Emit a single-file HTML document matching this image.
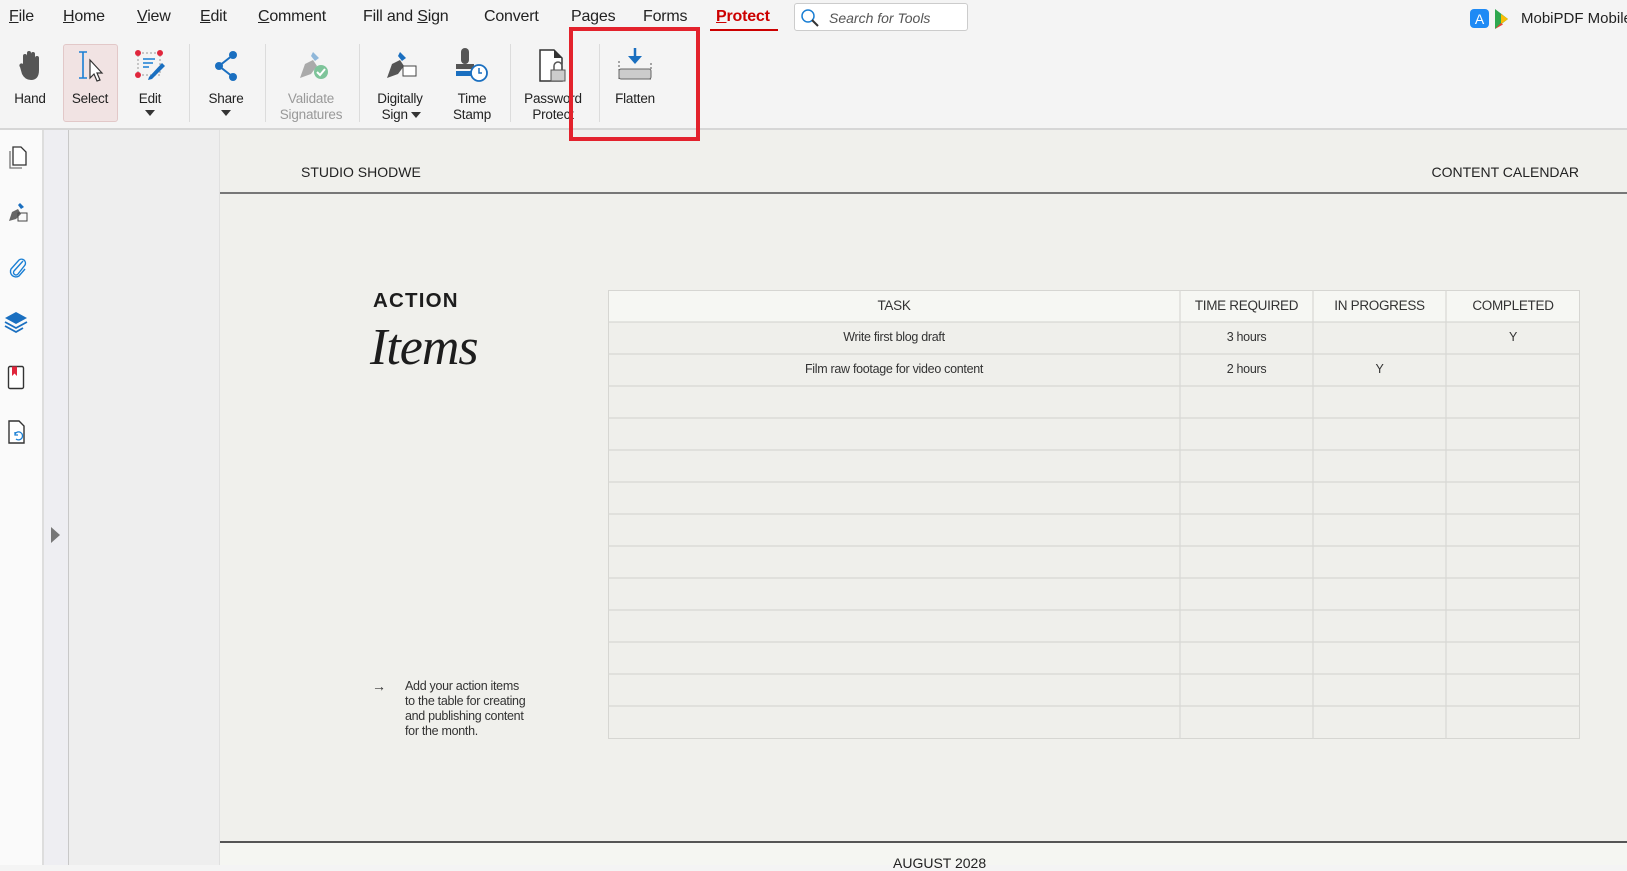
<!DOCTYPE html>
<html><head><meta charset="utf-8"><style>
*{margin:0;padding:0;box-sizing:border-box}
body{width:1627px;height:865px;overflow:hidden;background:#f4f4f4;font-family:"Liberation Sans",sans-serif;position:relative;color:#222}
.a{position:absolute}
.m{position:absolute;top:8px;font-size:16px;color:#222;letter-spacing:-0.2px}
.m u{text-decoration:underline}
.tb{position:absolute;top:91px;font-size:13.5px;color:#222;text-align:center;line-height:16px;transform:translateX(-50%);white-space:nowrap;letter-spacing:-0.2px}
.sep{position:absolute;top:44px;width:1px;height:78px;background:#dcdcdc}
.ic{position:absolute}
.cell{position:absolute;font-size:12.5px;color:#333;text-align:center;letter-spacing:-0.3px}
</style></head><body>
<!-- menu -->
<div class="m" style="left:9px"><u>F</u>ile</div>
<div class="m" style="left:63px"><u>H</u>ome</div>
<div class="m" style="left:137px"><u>V</u>iew</div>
<div class="m" style="left:200px"><u>E</u>dit</div>
<div class="m" style="left:258px"><u>C</u>omment</div>
<div class="m" style="left:363px">Fill and <u>S</u>ign</div>
<div class="m" style="left:484px">Convert</div>
<div class="m" style="left:571px">Pages</div>
<div class="m" style="left:643px">Forms</div>
<div class="m" style="left:716px;color:#c00;font-weight:bold"><u>P</u>rotect</div>
<div class="a" style="left:710px;top:29px;width:68px;height:2px;background:#c00"></div>
<div class="a" style="left:794px;top:3px;width:174px;height:28px;background:#fff;border:1px solid #ccc;border-radius:3px"></div>
<svg class="a" style="left:800px;top:8px" width="20" height="20"><circle cx="8" cy="8" r="6" fill="none" stroke="#1a7fd4" stroke-width="1.5"/><line x1="12" y1="12" x2="18" y2="18" stroke="#333" stroke-width="2"/></svg>
<div class="a" style="left:829px;top:10px;font-size:14px;font-style:italic;color:#555">Search for Tools</div>
<svg class="a" style="left:1470px;top:9px" width="46" height="20"><rect x="0" y="0" width="19" height="19" rx="4" fill="#1e8af5"/><text x="9.5" y="15" font-size="14" fill="#fff" text-anchor="middle" font-family="Liberation Sans">A</text><path d="M25 0 L38 10 L25 20Z" fill="#2fa84f"/><path d="M31 5 L38 10 L31 15Z" fill="#fbbc04"/><path d="M25 20 L31 14 L33 15.5Z" fill="#ea4335"/></svg>
<div class="a" style="left:1521px;top:10px;font-size:15px;white-space:nowrap">MobiPDF Mobile</div>

<!-- toolbar -->
<div class="a" style="left:63px;top:44px;width:55px;height:78px;background:#f1e3e3;border:1px solid #e2c8c8;border-radius:3px"></div>
<svg class="ic" style="left:18px;top:50px" width="26" height="32"><path d="M5 14 V6 a2 2 0 0 1 4 0 V13 V3 a2 2 0 0 1 4 0 V13 V4 a2 2 0 0 1 4 0 V14 V8 a2 2 0 0 1 4 0 V20 q0 10 -8 10 q-6 0 -9 -6 L2 17 a2 2 0 0 1 3 -3Z" fill="#555"/></svg>
<svg class="ic" style="left:76px;top:50px" width="30" height="34"><path d="M3 2h8M7 2v26M3 28h8" stroke="#1a7fd4" stroke-width="1.6" fill="none"/><path d="M14 10 L14 28 L18 24 L21 31 L24 30 L21 23 L26 23Z" fill="#fff" stroke="#333" stroke-width="1.2"/></svg>
<svg class="ic" style="left:134px;top:49px" width="32" height="34"><rect x="4" y="4" width="22" height="22" fill="none" stroke="#999" stroke-dasharray="2 2"/><circle cx="4" cy="4" r="3" fill="#e0263c"/><circle cx="26" cy="4" r="3" fill="#e0263c"/><circle cx="4" cy="26" r="3" fill="#e0263c"/><path d="M9 10h12M9 14h10M9 18h6" stroke="#1a7fd4" stroke-width="1.6"/><path d="M15 28 L28 14 L31 17 L18 30 L14 31Z" fill="#1a6fc0"/></svg>
<div class="a" style="left:145px;top:110px;border:5px solid transparent;border-top:6px solid #333"></div>
<svg class="ic" style="left:213px;top:51px" width="28" height="30"><circle cx="20" cy="4" r="4" fill="#1a6fc0"/><circle cx="6" cy="15" r="4" fill="#1a6fc0"/><circle cx="20" cy="26" r="4" fill="#1a6fc0"/><path d="M20 4 L6 15 L20 26" stroke="#1a6fc0" stroke-width="2" fill="none"/></svg>
<div class="a" style="left:221px;top:110px;border:5px solid transparent;border-top:6px solid #333"></div>
<svg class="ic" style="left:297px;top:50px" width="32" height="32"><path d="M3 28 L8 14 L16 10 L20 16 L14 24Z" fill="#aaa"/><path d="M16 2 L22 8 L18 11 L14 6Z" fill="#8fb7d9"/><circle cx="24" cy="22" r="7" fill="#7ec49a"/><path d="M20 22 l3 3 l5 -6" stroke="#fff" stroke-width="2" fill="none"/></svg>
<svg class="ic" style="left:384px;top:50px" width="34" height="32"><path d="M3 28 L8 14 L16 10 L20 16 L14 24Z" fill="#555"/><path d="M16 2 L22 8 L18 11 L14 6Z" fill="#1a6fc0"/><rect x="19" y="16" width="13" height="10" fill="#fff" stroke="#444"/></svg>
<div class="a" style="left:411px;top:112px;border:5px solid transparent;border-top:6px solid #333"></div>
<svg class="ic" style="left:454px;top:48px" width="36" height="36"><rect x="7" y="0" width="8" height="16" rx="4" fill="#555"/><rect x="2" y="16" width="18" height="5" fill="#555"/><rect x="2" y="23" width="18" height="5" fill="#1a6fc0"/><circle cx="25" cy="25" r="8" fill="#fff" stroke="#1a6fc0" stroke-width="1.8"/><path d="M25 20v5h3" stroke="#1a6fc0" stroke-width="1.5" fill="none"/></svg>
<svg class="ic" style="left:538px;top:48px" width="30" height="36"><path d="M2 2 H16 L24 10 V33 H2Z" fill="#fff" stroke="#333" stroke-width="1.5"/><path d="M16 2 V10 H24" fill="#333"/><rect x="13" y="22" width="14" height="11" fill="#ccc" stroke="#555"/><path d="M16 22 v-4 a4 4 0 0 1 8 0 v4" fill="none" stroke="#555" stroke-width="1.5"/></svg>
<svg class="ic" style="left:617px;top:47px" width="36" height="36"><path d="M18 1 V14" stroke="#1a6fc0" stroke-width="2.5"/><path d="M11 9 L18 17 L25 9Z" fill="#1a6fc0"/><path d="M2 14 V32 H34 V14" fill="none" stroke="#555" stroke-dasharray="2 2"/><rect x="2" y="22" width="32" height="10" rx="2" fill="#ccc" stroke="#666"/></svg>
<div class="tb" style="left:30px">Hand</div>
<div class="tb" style="left:90px">Select</div>
<div class="tb" style="left:150px">Edit</div>
<div class="tb" style="left:226px">Share</div>
<div class="tb" style="left:311px;color:#999">Validate<br>Signatures</div>
<div class="tb" style="left:400px">Digitally<br>Sign&nbsp;&nbsp;&nbsp;</div>
<div class="tb" style="left:472px">Time<br>Stamp</div>
<div class="tb" style="left:553px">Password<br>Protect</div>
<div class="tb" style="left:635px">Flatten</div>
<div class="sep" style="left:189px"></div><div class="sep" style="left:265px"></div><div class="sep" style="left:359px"></div><div class="sep" style="left:510px"></div><div class="sep" style="left:599px"></div>
<div class="a" style="left:0;top:128px;width:1627px;height:2px;background:#d6d6d6"></div>

<!-- left panels -->
<div class="a" style="left:0;top:130px;width:42px;height:735px;background:#fafafa"></div>
<div class="a" style="left:42px;top:130px;width:2px;height:735px;background:#ddd"></div>
<div class="a" style="left:44px;top:130px;width:24px;height:735px;background:#eeeef2"></div>
<div class="a" style="left:68px;top:130px;width:1px;height:735px;background:#c8c8c8"></div>
<div class="a" style="left:69px;top:130px;width:151px;height:735px;background:#eeeeee;border-right:1px solid #e0e0e0"></div>
<div class="a" style="left:51px;top:527px;border:8px solid transparent;border-left:9px solid #777;border-right:0"></div>
<svg class="ic" style="left:7px;top:145px" width="24" height="24"><path d="M6 2 H14 L19 7 V20 H6Z" fill="#fff" stroke="#333" stroke-width="1.3"/><path d="M3 6 V23 H15" fill="none" stroke="#777" stroke-width="1.3"/></svg>
<svg class="ic" style="left:7px;top:201px" width="24" height="24"><path d="M2 20 L5 11 L11 8 L14 13 L9 18Z" fill="#666"/><path d="M13 2 L17 6 L14 8 L11 4Z" fill="#1a6fc0"/><rect x="11" y="12" width="9" height="8" fill="none" stroke="#444"/></svg>
<svg class="ic" style="left:7px;top:256px" width="24" height="24"><path d="M16 5 L7 15 a2.5 2.5 0 0 0 4 3 L18 9 a4 4 0 0 0 -6 -5 L4 13 a5.5 5.5 0 0 0 8 7 L18 13" fill="none" stroke="#1a7fd4" stroke-width="1.4"/></svg>
<svg class="ic" style="left:4px;top:310px" width="26" height="24"><path d="M12 2 L23 8 L12 14 L1 8Z" fill="#1a6fc0"/><path d="M1 12 L12 18 L23 12 M1 16 L12 22 L19 18" fill="none" stroke="#1a6fc0" stroke-width="1.8"/></svg>
<svg class="ic" style="left:7px;top:365px" width="22" height="26"><rect x="1.5" y="1.5" width="15" height="22" rx="1.5" fill="#fff" stroke="#333" stroke-width="1.4"/><path d="M5 1.5 V11 L7.5 8.5 L10 11 V1.5Z" fill="#e0263c"/></svg>
<svg class="ic" style="left:7px;top:419px" width="22" height="26"><path d="M2 2 H12 L17 7 V24 H2Z" fill="#fff" stroke="#333" stroke-width="1.4"/><path d="M8 15 a4 4 0 1 1 1 5 M8 13 v3 h3" fill="none" stroke="#1a7fd4" stroke-width="1.3"/></svg>

<!-- page -->
<div class="a" style="left:220px;top:130px;width:1407px;height:735px;background:#f0f0ec"></div>
<div class="a" style="left:301px;top:164px;font-size:14px;color:#222">STUDIO SHODWE</div>
<div class="a" style="right:48px;top:164px;font-size:14px;color:#222">CONTENT CALENDAR</div>
<div class="a" style="left:220px;top:192px;width:1407px;height:2px;background:#777"></div>
<div class="a" style="left:373px;top:289px;font-size:20.5px;font-weight:bold;letter-spacing:1.2px;color:#1d1d1d">ACTION</div>
<div class="a" style="left:370px;top:318px;font-size:52px;font-style:italic;font-family:'Liberation Serif',serif;color:#1d1d1d;letter-spacing:-1px">Items</div>
<div class="a" style="left:372px;top:678px;font-size:14px;color:#333">&rarr;</div>
<div class="a" style="left:405px;top:679px;font-size:12.5px;line-height:15px;color:#333;letter-spacing:-0.3px">Add your action items<br>to the table for creating<br>and publishing content<br>for the month.</div>

<!-- table -->
<div class="a" style="left:608px;top:290px;width:972px;height:449px;background:#efefeb;border:1px solid #d6d6d2"></div>
<div class="a" style="left:609px;top:291px;width:970px;height:31px;background:#f6f7f3"></div>
<svg class="a" style="left:608px;top:290px" width="972" height="449">
<g stroke="#d8d8d4" stroke-width="1.2">
<line x1="572" y1="0" x2="572" y2="449"/><line x1="705" y1="0" x2="705" y2="449"/><line x1="838" y1="0" x2="838" y2="449"/>
<line x1="0" y1="32" x2="972" y2="32"/><line x1="0" y1="64" x2="972" y2="64"/><line x1="0" y1="96" x2="972" y2="96"/><line x1="0" y1="128" x2="972" y2="128"/><line x1="0" y1="160" x2="972" y2="160"/><line x1="0" y1="192" x2="972" y2="192"/><line x1="0" y1="224" x2="972" y2="224"/><line x1="0" y1="256" x2="972" y2="256"/><line x1="0" y1="288" x2="972" y2="288"/><line x1="0" y1="320" x2="972" y2="320"/><line x1="0" y1="352" x2="972" y2="352"/><line x1="0" y1="384" x2="972" y2="384"/><line x1="0" y1="416" x2="972" y2="416"/>
</g></svg>
<div class="cell" style="left:608px;width:572px;top:298px;font-size:13.5px">TASK</div>
<div class="cell" style="left:1180px;width:133px;top:298px;font-size:13.5px">TIME REQUIRED</div>
<div class="cell" style="left:1313px;width:133px;top:298px;font-size:13.5px">IN PROGRESS</div>
<div class="cell" style="left:1446px;width:134px;top:298px;font-size:13.5px">COMPLETED</div>
<div class="cell" style="left:608px;width:572px;top:330px">Write first blog draft</div>
<div class="cell" style="left:1180px;width:133px;top:330px">3 hours</div>
<div class="cell" style="left:1446px;width:134px;top:330px">Y</div>
<div class="cell" style="left:608px;width:572px;top:362px">Film raw footage for video content</div>
<div class="cell" style="left:1180px;width:133px;top:362px">2 hours</div>
<div class="cell" style="left:1313px;width:133px;top:362px">Y</div>

<div class="a" style="left:220px;top:841px;width:1407px;height:2px;background:#555"></div>
<div class="a" style="left:220px;top:843px;width:1407px;height:22px;background:#f5f6f2"></div>
<div class="a" style="left:893px;top:855px;font-size:14px;color:#222">AUGUST 2028</div>

<div class="a" style="left:569px;top:27px;width:131px;height:114px;border:4px solid #e3222c;z-index:10"></div>
</body></html>
